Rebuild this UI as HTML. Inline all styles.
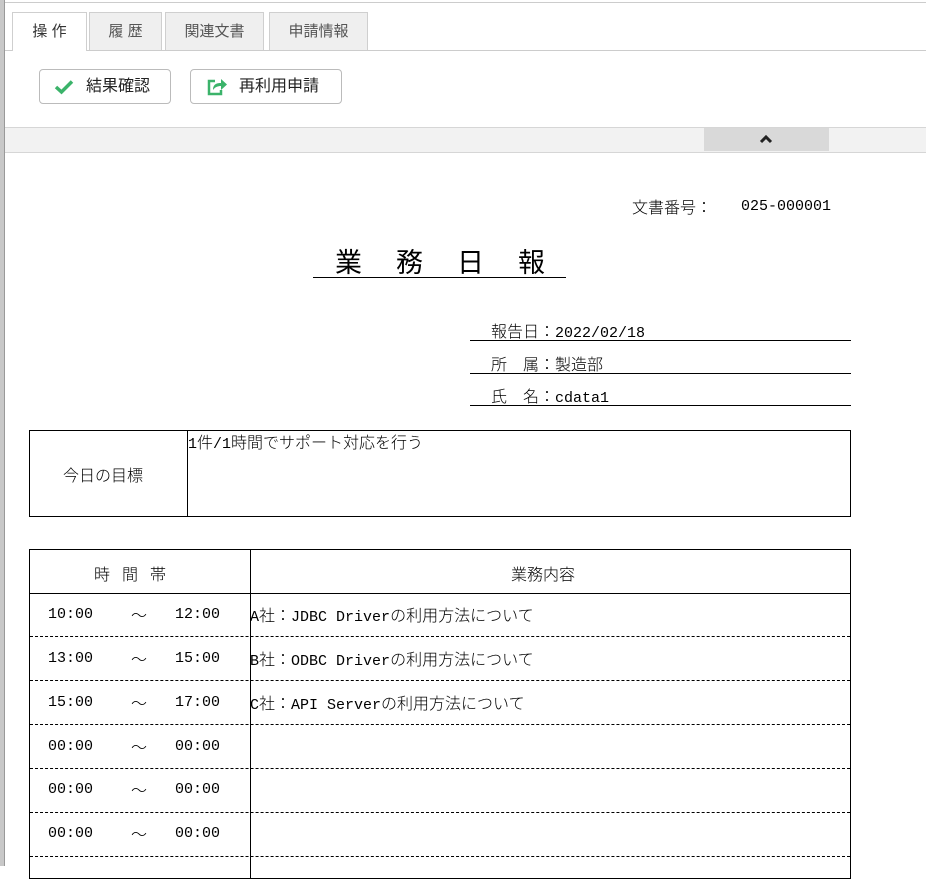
<!DOCTYPE html>
<html><head><meta charset="utf-8">
<style>
*{margin:0;padding:0;box-sizing:border-box}
body{width:926px;height:866px;overflow:hidden;background:#fff;position:relative;font-family:"Liberation Sans","Noto Sans CJK JP",sans-serif;color:#000}
.a{position:absolute}
.tab{position:absolute;top:12px;height:38px;background:#efefef;border:1px solid #cfcfcf;border-bottom:none;font-size:15px;color:#555;text-align:center;line-height:38px}
.btn{position:absolute;top:69px;height:35px;border:1px solid #bbb;border-radius:4px;background:#fff;font-size:16px;color:#222;line-height:33px}
.t{font-family:"Noto Sans CJK JP",sans-serif;font-size:16px;position:absolute;white-space:nowrap;line-height:20px;font-weight:300}
.m{font-family:"Liberation Mono",monospace;font-size:15px}
.hl{position:absolute;height:1px;background:#000}
.dl{position:absolute;left:30px;width:820px;border-top:1px dashed #000}
</style></head><body>
<div class="a" style="left:0;top:0;width:4px;height:866px;background:#c8c8c8"></div>
<div class="a" style="left:4px;top:0;width:1px;height:866px;background:#999"></div>
<div class="a" style="left:5px;top:2px;width:921px;height:1px;background:#ccc"></div>
<div class="a" style="left:5px;top:50px;width:921px;height:1px;background:#ccc"></div>
<div class="tab" style="left:12px;width:75px;background:#fff;height:39px;color:#333">操 作</div>
<div class="tab" style="left:89px;width:73px">履 歴</div>
<div class="tab" style="left:165px;width:99px">関連文書</div>
<div class="tab" style="left:269px;width:99px">申請情報</div>
<div class="btn" style="left:39px;width:132px;padding-left:46px">結果確認</div>
<svg class="a" style="left:54px;top:79px" width="20" height="16" viewBox="0 0 20 16"><path d="M2 8 L7.5 13 L18 2.5" stroke="#3bb36a" stroke-width="3.5" fill="none"/></svg>
<div class="btn" style="left:190px;width:152px;padding-left:48px">再利用申請</div>
<svg class="a" style="left:206px;top:77px" width="22" height="20" viewBox="0 0 22 20"><path d="M9 4 H3 V17 H15 V13" stroke="#3bb36a" stroke-width="2.5" fill="none"/><path d="M7 13 C7 7 11 6 15 6 V2 L21 7.5 L15 13 V9 C12 9 9 10 7 13Z" fill="#3bb36a"/></svg>
<div class="a" style="left:5px;top:127px;width:921px;height:26px;background:#f2f2f2;border-top:1px solid #d6d6d6;border-bottom:1px solid #d6d6d6"></div>
<div class="a" style="left:704px;top:128px;width:125px;height:23px;background:#d9d9d9"></div>
<svg class="a" style="left:759px;top:134px" width="14" height="10" viewBox="0 0 14 10"><path d="M2 8 L7 3 L12 8" stroke="#222" stroke-width="3" fill="none"/></svg>

<div class="t" style="left:632px;top:196px">文書番号：</div><div class="t m" style="left:741px;top:197px">025-000001</div>
<div class="t" style="left:335px;top:245px;font-size:27px;line-height:32px;font-weight:400;letter-spacing:34px">業務日報</div>
<div class="hl" style="left:313px;top:277px;width:253px"></div>
<div class="t" style="left:491px;top:320px">報告日：<span class="m">2022/02/18</span></div>
<div class="hl" style="left:470px;top:340px;width:381px"></div>
<div class="t" style="left:491px;top:353px">所　属：製造部</div>
<div class="hl" style="left:470px;top:373px;width:381px"></div>
<div class="t" style="left:491px;top:385px">氏　名：<span class="m">cdata1</span></div>
<div class="hl" style="left:470px;top:405px;width:381px"></div>

<div class="a" style="left:29px;top:430px;width:822px;height:87px;border:1px solid #000"></div>
<div class="a" style="left:187px;top:430px;width:1px;height:87px;background:#000"></div>
<div class="t" style="left:63px;top:464px">今日の目標</div>
<div class="t" style="left:188px;top:431px"><span class="m">1</span>件<span class="m">/1</span>時間でサポート対応を行う</div>

<div class="a" style="left:29px;top:549px;width:822px;height:330px;border:1px solid #000"></div>
<div class="a" style="left:250px;top:549px;width:1px;height:330px;background:#000"></div>
<div class="hl" style="left:29px;top:593px;width:822px"></div>
<div class="t" style="left:94px;top:563px;letter-spacing:12px">時間帯</div>
<div class="t" style="left:511px;top:563px">業務内容</div>
<div class="dl" style="top:636px"></div>
<div class="dl" style="top:680px"></div>
<div class="dl" style="top:724px"></div>
<div class="dl" style="top:768px"></div>
<div class="dl" style="top:812px"></div>
<div class="dl" style="top:856px"></div>

<div class="t m" style="left:48px;top:605px">10:00</div><div class="t" style="left:131px;top:604px">～</div><div class="t m" style="left:175px;top:605px">12:00</div><div class="t" style="left:250px;top:604px"><span class="m">A</span>社：<span class="m">JDBC Driver</span>の利用方法について</div>
<div class="t m" style="left:48px;top:649px">13:00</div><div class="t" style="left:131px;top:648px">～</div><div class="t m" style="left:175px;top:649px">15:00</div><div class="t" style="left:250px;top:648px"><span class="m">B</span>社：<span class="m">ODBC Driver</span>の利用方法について</div>
<div class="t m" style="left:48px;top:693px">15:00</div><div class="t" style="left:131px;top:692px">～</div><div class="t m" style="left:175px;top:693px">17:00</div><div class="t" style="left:250px;top:692px"><span class="m">C</span>社：<span class="m">API Server</span>の利用方法について</div>
<div class="t m" style="left:48px;top:737px">00:00</div><div class="t" style="left:131px;top:736px">～</div><div class="t m" style="left:175px;top:737px">00:00</div>
<div class="t m" style="left:48px;top:780px">00:00</div><div class="t" style="left:131px;top:779px">～</div><div class="t m" style="left:175px;top:780px">00:00</div>
<div class="t m" style="left:48px;top:824px">00:00</div><div class="t" style="left:131px;top:823px">～</div><div class="t m" style="left:175px;top:824px">00:00</div>
</body></html>
